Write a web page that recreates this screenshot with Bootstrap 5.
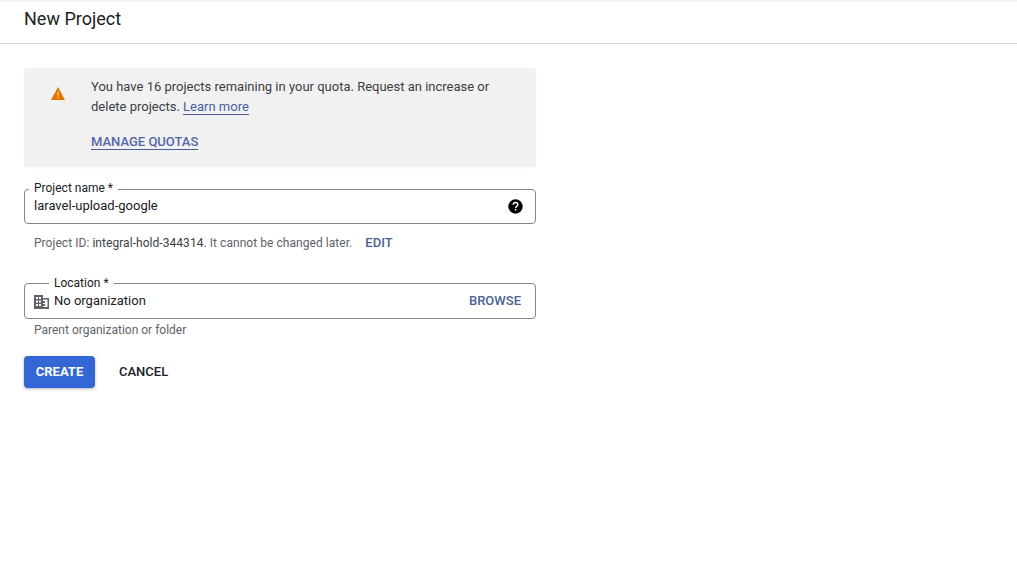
<!DOCTYPE html>
<html lang="en">
<head>
<meta charset="utf-8">
<title>New Project</title>
<link href="https://cdn.jsdelivr.net/npm/bootstrap@5.3.0/dist/css/bootstrap.min.css" rel="stylesheet">
<style>
html,body{height:100%;background:#fff;overflow:hidden}
body{font-family:Roboto,"Liberation Sans",sans-serif;color:#202124;font-size:13px}
.page-head{height:44px;border-top:2px solid #f4f4f4;border-bottom:1px solid #dadce0;padding-left:24px;display:flex;align-items:flex-start}
.page-head h1{font-size:18px;font-weight:400;line-height:24px;margin:5px 0 0;color:#202124}
.form-wrap{width:512px;margin:24px 0 0 24px}
.quota-box{height:99px;background:#f1f1f2;border-radius:3px;padding:9px 40px 0 27px;display:flex;box-shadow:0 1px 2px rgba(0,0,0,.03)}
.quota-box svg{flex:none;margin:10px 26px 0 0}
.quota-text{line-height:20px;color:#3c4043}
.quota-text a{color:#4a5fa5;text-decoration:none;border-bottom:1px solid #4a5f95}
.quota-action{margin-top:15px;line-height:19px;font-weight:500;display:block}
.quota-action a{border-bottom:1px solid #4a5f95;color:#5468a8}
.outlined{border:1px solid #80868b;border-radius:4px;margin:0;padding:0 12px 0 9px;min-width:0}
.outlined legend{float:none;width:auto;font-size:12px;line-height:14px;margin:0;padding:0 5px 2px;color:#202124;font-weight:400}
.legend-a{height:43px}
.legend-b{height:43px;padding-right:14px}
.legend-a legend{margin-left:-5px}
.outlined.legend-b legend{margin-left:15px;padding-bottom:1px}
.field-row{display:flex;align-items:center;height:20px}
.legend-a .field-row{margin-top:-1px}
.field-one{margin-top:14px}
.field-two{margin-top:25px}
.field-value{flex:1;color:#202124;font-size:13px;line-height:20px}
.hint{font-size:12px;color:#5f6368;padding-left:10px;line-height:16px}
.hint-id{margin-top:11px;display:flex;align-items:center;letter-spacing:.05px}
.hint-id b{font-weight:400;color:#3c4043}
.hint-id a{margin-left:13px;font-size:13px;letter-spacing:0;font-weight:500;color:#4a6391;text-decoration:none}
.hint-parent{margin-top:3px}
.browse{color:#4a6391;font-size:13px;font-weight:500}
.bldg{flex:none;margin-right:5px}
.action-row{margin-top:18px;display:flex;align-items:center}
.btn.btn-create{background:#3367d6;border:0;color:#fff;font-size:13px;font-weight:700;width:71px;height:32px;padding:0;border-radius:4px;box-shadow:0 1px 3px rgba(60,64,67,.4)}
.btn.btn-cancel{background:transparent;border:0;color:#202124;font-size:13px;font-weight:500;padding:0;margin-left:24px}
</style>
</head>
<body>
<header class="page-head"><h1>New Project</h1></header>
<main class="form-wrap">
  <div class="quota-box">
    <svg width="14" height="13" viewBox="0 0 14 13" aria-hidden="true"><path d="M7 0 14 13H0Z" fill="#e37400"/><rect x="6.3" y="4.600" width="1.4" height="4" fill="#f7c98f"/><rect x="6.3" y="9.600" width="1.4" height="1.4" fill="#f7c98f"/></svg>
    <div class="quota-text">
      You have 16 projects remaining in your quota. Request an increase or delete projects. <a href="#">Learn more</a>
      <span class="quota-action"><a href="#">MANAGE QUOTAS</a></span>
    </div>
  </div>
  <fieldset class="outlined legend-a field-one">
    <legend>Project name *</legend>
    <div class="field-row">
      <span class="field-value">laravel-upload-google</span>
      <svg width="15" height="15" viewBox="0 0 15 15" aria-hidden="true"><circle cx="7.5" cy="7.5" r="7.2" fill="#000"/><path d="M5.2 5.800c0-1.400 1-2.200 2.300-2.200s2.300.8 2.300 2c0 1.700-2 1.700-2 3.400" fill="none" stroke="#fff" stroke-width="1.500"/><rect x="6.900" y="10" width="1.500" height="1.500" fill="#fff"/></svg>
    </div>
  </fieldset>
  <div class="hint hint-id"><span>Project ID: <b>integral-hold-344314.</b> It cannot be changed later.</span><a href="#">EDIT</a></div>
  <fieldset class="outlined legend-b field-two">
    <legend>Location *</legend>
    <div class="field-row">
      <svg class="bldg" width="15" height="15" viewBox="0 0 15 15" aria-hidden="true"><path fill="#5f6368" fill-rule="evenodd" d="M0 1h9v3h6v11H0ZM2 3v2h2V3Zm3 0v2h2V3ZM2 6.500v2h2v-2Zm3 0v2h2v-2ZM2 10v2h2v-2Zm3 0v2h2v-2Zm4-4.500v1.500h2v2H9v1h2v2H9V13h4.500V5.500Z"/></svg>
      <span class="field-value">No organization</span>
      <span class="browse">BROWSE</span>
    </div>
  </fieldset>
  <div class="hint hint-parent">Parent organization or folder</div>
  <div class="action-row">
    <button type="button" class="btn btn-create">CREATE</button>
    <button type="button" class="btn btn-cancel">CANCEL</button>
  </div>
</main>
<script src="https://cdn.jsdelivr.net/npm/bootstrap@5.3.0/dist/js/bootstrap.bundle.min.js"></script>
</body>
</html>
